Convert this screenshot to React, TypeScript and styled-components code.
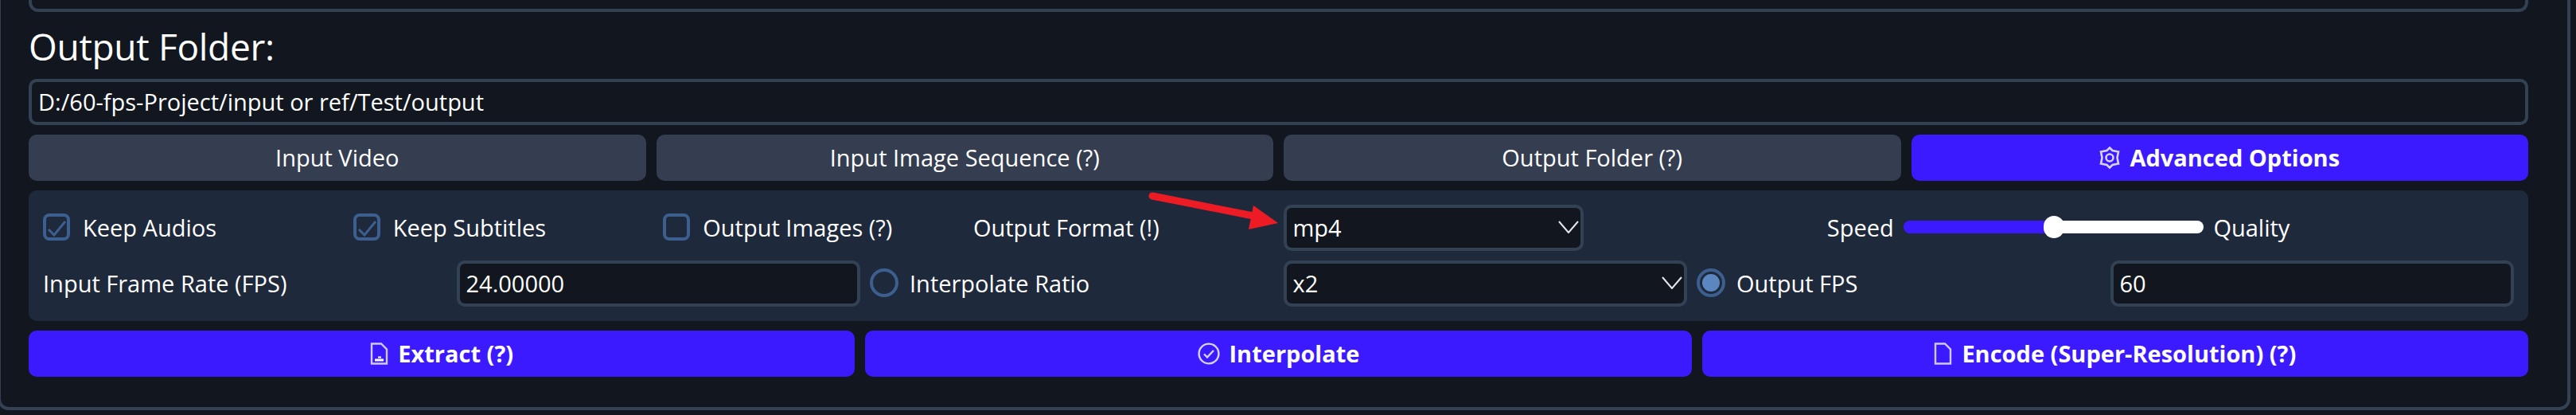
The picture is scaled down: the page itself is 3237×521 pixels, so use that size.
import React from "react";
import styled, { createGlobalStyle } from "styled-components";

const Global = createGlobalStyle`
    html, body {
        margin: 0;
        background: #12171f;
    }
    * {
        box-sizing: border-box;
    }
`;

const Frame = styled.div`
    position: relative;
    width: 3233px;
    height: 515px;
    margin-left: -3px;
    padding: 0 49px 0 35px;
    border: 4px solid #334155;
    border-top: none;
    border-radius: 0 0 14px 14px;
    font-family: "Open Sans", "Noto Sans", sans-serif;
    font-size: 29px;
    color: #fff;
`;

const TopBox = styled.div`
    height: 15px;
    border: 4px solid #334155;
    border-top: none;
    border-radius: 0 0 12px 12px;
`;

const Heading = styled.div`
    height: 72px;
    margin-top: 12px;
    font-size: 46px;
    line-height: 62px;
    letter-spacing: -0.3px;
`;

const TextBox = styled.div`
    display: flex;
    align-items: center;
    justify-content: space-between;
    height: 58px;
    padding: 0 2px 2px 8px;
    border: 4px solid #334155;
    border-radius: 10px;
    background: #12171f;
`;

const ButtonRow = styled.div<{ $cols: number }>`
    display: grid;
    grid-template-columns: repeat(${(p) => p.$cols}, 1fr);
    gap: 13px;
    margin-top: 12px;
`;

const Btn = styled.div<{ $primary?: boolean }>`
    display: flex;
    align-items: center;
    justify-content: center;
    gap: 12px;
    height: 58px;
    padding-bottom: 2px;
    border-radius: 10px;
    background: ${(p) => (p.$primary ? "#3c1aff" : "#343e50")};
    font-weight: ${(p) => (p.$primary ? 700 : 400)};
    > svg {
        margin-top: 2px;
    }
`;

const Panel = styled.div`
    display: flex;
    flex-direction: column;
    gap: 12px;
    margin-top: 12px;
    padding: 18px;
    border-radius: 10px;
    background: #1e293b;
`;

const Row = styled.div<{ $cols: number }>`
    display: grid;
    grid-template-columns: repeat(${(p) => p.$cols}, minmax(0, 1fr));
    gap: 12px;
    height: 58px;
`;

const Cell = styled.div<{ $end?: boolean }>`
    display: flex;
    align-items: center;
    justify-content: ${(p) => (p.$end ? "flex-end" : "flex-start")};
    padding-bottom: 2px;
    white-space: nowrap;
`;

const CheckBox = styled.div`
    flex: none;
    width: 34px;
    height: 34px;
    margin-right: 16px;
    border: 4px solid #3d5f8f;
    border-radius: 8px;
`;

const Radio = styled.div<{ $on?: boolean }>`
    flex: none;
    width: 36px;
    height: 36px;
    margin-right: 14px;
    padding: 3px;
    border: 4px solid #3d5f8f;
    border-radius: 50%;
    &::after {
        content: "";
        display: block;
        width: 100%;
        height: 100%;
        border-radius: 50%;
        background: ${(p) => (p.$on ? "#5b86c0" : "transparent")};
    }
`;

const Slider = styled.div`
    position: relative;
    width: 100%;
    height: 16px;
    border-radius: 8px;
    background: linear-gradient(to right, #3c1aff 50%, #fff 50%);
`;

const Thumb = styled.div`
    position: absolute;
    left: 50%;
    top: -6px;
    width: 26px;
    height: 28px;
    margin-left: -13px;
    border-radius: 13px;
    background: #fff;
`;

const Arrow = styled.svg`
    position: absolute;
    left: -1px;
    top: 0;
    pointer-events: none;
`;

const Chevron = () => (
    <svg width="26" height="16" viewBox="0 0 26 16" fill="none" stroke="#e5e7eb" strokeWidth="2">
        <path d="M1 1 L13 15 L25 1" />
    </svg>
);

const Tick = () => (
    <svg width="26" height="26" viewBox="0 0 26 26" fill="none" stroke="#3d5f8f" strokeWidth="3" display="block">
        <path d="M3 16 L10 23 L24 6" />
    </svg>
);

const GearIcon = () => (
    <svg width="26" height="28" viewBox="0 0 26 28" fill="none" stroke="#d8d2ff" strokeWidth="2.6">
        <path d="M13 1.5 L16.5 5 L24 6.5 L22.5 14 L24 21.5 L16.5 23 L13 26.5 L9.5 23 L2 21.5 L3.5 14 L2 6.5 L9.5 5 Z" />
        <circle cx="13" cy="14" r="4.5" />
    </svg>
);

const FileImageIcon = () => (
    <svg width="23" height="28" viewBox="0 0 23 28" fill="none" stroke="#d0c8ff" strokeWidth="2.4">
        <path d="M2 1.5 H14 L21 8.5 V26.5 H2 Z" />
        <path d="M6 22 H17" stroke="#fff" strokeWidth="3" />
        <path d="M10 18.5 H14" stroke="#fff" strokeWidth="2" />
    </svg>
);

const FileIcon = () => (
    <svg width="23" height="28" viewBox="0 0 23 28" fill="none" stroke="#d0c8ff" strokeWidth="2.4">
        <path d="M2 1.5 H14 L21 8.5 V26.5 H2 Z" />
    </svg>
);

const CheckCircleIcon = () => (
    <svg width="28" height="28" viewBox="0 0 28 28" fill="none" stroke="#d8d2ff" strokeWidth="2.4">
        <circle cx="14" cy="14" r="12.4" />
        <path d="M8 14.5 L12 18.5 L20 10" />
    </svg>
);

const App: React.FC = () => {
    return (
        <>
            <Global />
            <Frame>
                <TopBox />
                <Heading>Output Folder:</Heading>
                <TextBox>D:/60-fps-Project/input or ref/Test/output</TextBox>
                <ButtonRow $cols={4}>
                    <Btn>Input Video</Btn>
                    <Btn>Input Image Sequence (?)</Btn>
                    <Btn>Output Folder (?)</Btn>
                    <Btn $primary>
                        <GearIcon />
                        Advanced Options
                    </Btn>
                </ButtonRow>
                <Panel>
                    <Row $cols={8}>
                        <Cell>
                            <CheckBox>
                                <Tick />
                            </CheckBox>
                            Keep Audios
                        </Cell>
                        <Cell>
                            <CheckBox>
                                <Tick />
                            </CheckBox>
                            Keep Subtitles
                        </Cell>
                        <Cell>
                            <CheckBox />
                            Output Images (?)
                        </Cell>
                        <Cell>Output Format (!)</Cell>
                        <TextBox>
                            mp4
                            <Chevron />
                        </TextBox>
                        <Cell $end>Speed</Cell>
                        <Cell>
                            <Slider>
                                <Thumb />
                            </Slider>
                        </Cell>
                        <Cell>Quality</Cell>
                    </Row>
                    <Row $cols={6}>
                        <Cell>Input Frame Rate (FPS)</Cell>
                        <TextBox>24.00000</TextBox>
                        <Cell>
                            <Radio />
                            Interpolate Ratio
                        </Cell>
                        <TextBox>
                            x2
                            <Chevron />
                        </TextBox>
                        <Cell>
                            <Radio $on />
                            Output FPS
                        </Cell>
                        <TextBox>60</TextBox>
                    </Row>
                </Panel>
                <ButtonRow $cols={3}>
                    <Btn $primary>
                        <FileImageIcon />
                        Extract (?)
                    </Btn>
                    <Btn $primary>
                        <CheckCircleIcon />
                        Interpolate
                    </Btn>
                    <Btn $primary>
                        <FileIcon />
                        Encode (Super-Resolution) (?)
                    </Btn>
                </ButtonRow>
                <Arrow width="1700" height="320">
                    <line x1="1448" y1="246" x2="1585" y2="273" stroke="#ed1c24" strokeWidth="9" strokeLinecap="round" />
                    <polygon points="1575,258 1606,280 1569,288" fill="#ed1c24" />
                </Arrow>
            </Frame>
        </>
    );
};

export default App;
